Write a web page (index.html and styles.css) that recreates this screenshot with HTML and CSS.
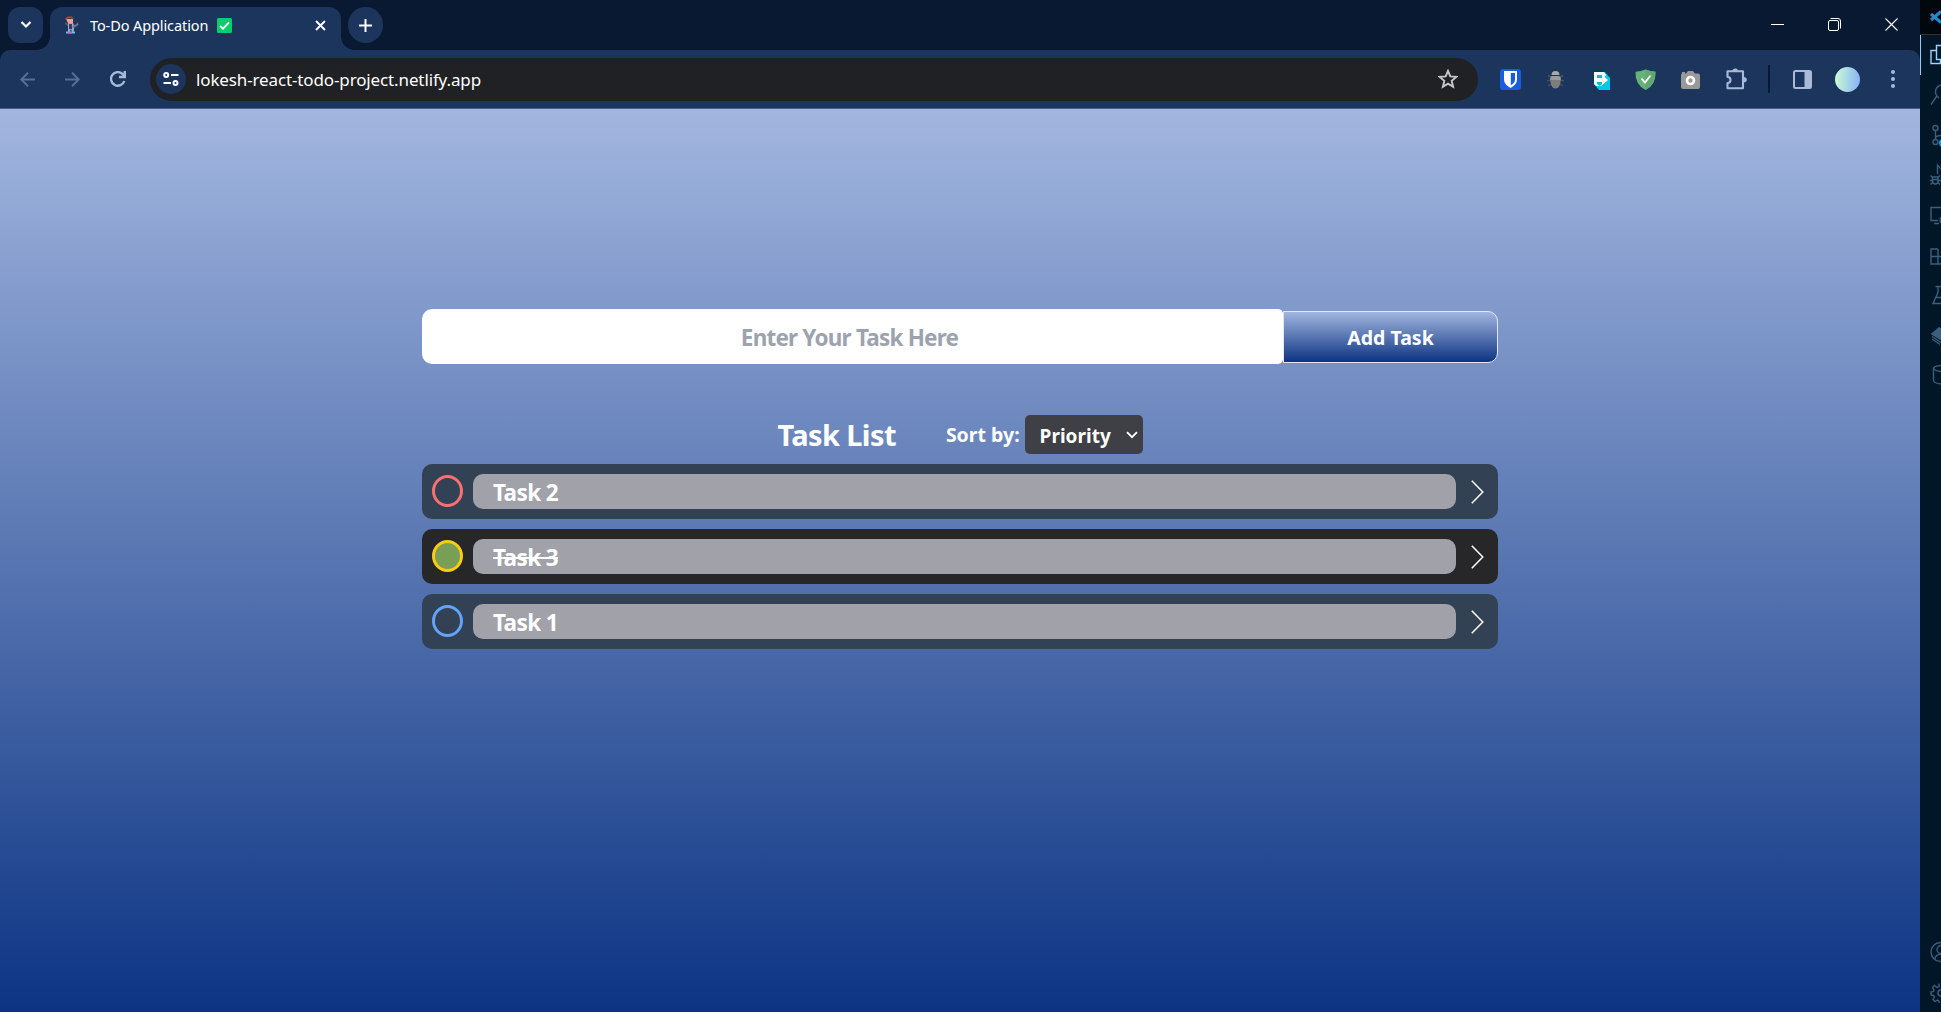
FILE: index.html
```html
<!DOCTYPE html>
<html lang="en">
<head>
<meta charset="utf-8">
<title>To-Do Application</title>
<link rel="stylesheet" href="styles.css">
</head>
<body>
<div class="screen">
  <div class="browser">
    <header class="tabstrip">
      <button class="tab-search" aria-label="Search tabs"><svg width="12" height="8" viewBox="0 0 12 8"><path d="M1.500 1 6 5.500 10.500 1" fill="none" stroke="#fff" stroke-width="2.200"/></svg></button>
      <div class="tab">
        <svg class="favicon" width="16" height="18" viewBox="0 0 16 18"><path d="M2 15.500h9v2H2z" fill="#5dc4e4"/><path d="M4 16h4v1.500H4z" fill="#d65ac6"/><path d="M4 7h5l1.500 3-1 6H8l-1-3-1.500 3H4z" fill="#9baac4"/><path d="M5 8h3v5H5z" fill="#334064"/><path d="M2 3h7v4H4z" fill="#e0a995"/><path d="M1 2.500 4 .5h4l2 2.500-5-1-3 2z" fill="#b8403d"/><path d="m8.500 10 4-2 1.500-2 .5 3-3 2-3 1z" fill="#68758a"/><path d="M1.500 6 4 8v2L1 8z" fill="#5d606c"/></svg>
        <span class="tab-title">To-Do Application</span>
        <svg class="check" width="15" height="15" viewBox="0 0 15 15"><rect width="15" height="15" rx="1.500" fill="#06ce6b"/><path d="m3 7.800 3 2.900 6-6.400" fill="none" stroke="#fff" stroke-width="1.800"/></svg>
        <svg class="tab-close" width="11" height="11" viewBox="0 0 11 11"><path d="m1 1 9 9M10 1 1 10" stroke="#fff" stroke-width="1.900"/></svg>
      </div>
      <button class="new-tab" aria-label="New tab"><svg width="13" height="13" viewBox="0 0 13 13"><path d="M6.500 0v13M0 6.500h13" stroke="#fff" stroke-width="2"/></svg></button>
      <div class="window-controls">
        <svg width="13" height="13" viewBox="0 0 13 13"><path d="M0 6.500h13" stroke="#fff"/></svg>
        <svg width="13" height="13" viewBox="0 0 13 13"><rect x=".5" y="2.500" width="10" height="10" rx="1.500" fill="none" stroke="#fff"/><path d="M2.500.5h7.500q2.500 0 2.500 2.500v7.500" fill="none" stroke="#fff"/></svg>
        <svg width="13" height="13" viewBox="0 0 13 13"><path d="m.5.5 12 12M12.500.5l-12 12" stroke="#fff" stroke-width="1.100"/></svg>
      </div>
    </header>

    <nav class="toolbar">
      <svg class="nav-icon dim" width="15" height="15" viewBox="0 0 15 15"><path d="M15 7.500H1.500M8 .7 1.300 7.500 8 14.300"/></svg>
      <svg class="nav-icon dim" width="15" height="15" viewBox="0 0 15 15"><path d="M0 7.500h13.500M7 .7l6.700 6.800L7 14.300"/></svg>
      <svg class="nav-icon reload" width="16" height="16" viewBox="0 0 16 16"><path d="M14.300 10A6.800 6.800 0 1 1 12.700 3.200L14.500 5.200M14.800 0v6H9"/></svg>
      <div class="omnibox">
        <span class="site-info"><svg width="16" height="14" viewBox="0 0 16 14" fill="none" stroke="#fff" stroke-width="2"><circle cx="3.200" cy="3" r="2"/><path d="M8 3h7.500M.5 11H8"/><circle cx="12.500" cy="11" r="2"/></svg></span>
        <span class="url">lokesh-react-todo-project.netlify.app</span>
        <svg class="star" width="20" height="20" viewBox="0 0 20 20"><path d="m10 1.800 2.300 5.600 6 .5-4.600 3.900 1.400 5.900L10 14.600l-5.100 3.100 1.400-5.900-4.600-3.900 6-.5z" fill="none" stroke="#c7c7c8" stroke-width="1.900"/></svg>
      </div>
      <div class="extensions">
        <svg width="26" height="26" viewBox="0 0 26 26"><rect x="3" y="3" width="21" height="21" rx="3" fill="#175ddc"/><path d="M7 5h13v8.500q0 5-6.500 8.500Q7 18.500 7 13.500z" fill="#fff"/><path d="M13.800 7H18v6.500q0 3.500-4.200 5.800z" fill="#175ddc"/></svg>
        <svg width="26" height="26" viewBox="0 0 26 26"><path d="M9 11 6 9.500m3 5H5m4 3.500-3 2M18 11l3-1.500m-3 5h4M18 18l3 2" stroke="#46536a" stroke-width="1.400"/><path d="M9.500 9q0-4 4-4t4 4z" fill="#aaa9a5"/><path d="M8.300 13q0-3 2.500-3h5.400q2.500 0 2.500 3 0 9.500-5.200 9.500T8.300 13z" fill="#7d7d7c"/><path d="M8.300 14v-1q0-3 2.500-3h5.400q2.500 0 2.500 3v1z" fill="#9b9b98"/></svg>
        <svg width="26" height="26" viewBox="0 0 26 26"><path d="M5 3h14v4H7v10H5z" fill="#063d5c"/><path d="M15 6h3l5 6v12H12l-5-6z" fill="#06c8e8"/><path d="M7 6h10l2 3-2 3v5l-3 3H9l-2-2z" fill="#fff"/><path d="M10 9h5v3h-5zm0 7h5v2l-2 2-3-2z" fill="#06b9d8"/><path d="M9 12h6V9l6 5-6 5v-3H9z" fill="#fff"/></svg>
        <svg width="26" height="26" viewBox="0 0 26 26"><path d="M13.500 3.500q4.500 2 10 2.300Q24 19 13.500 24 3 19 3.500 5.800q5.500-.3 10-2.300z" fill="#67b279"/><path d="M13.500 3.500q4.500 2 10 2.300Q24 19 13.500 24z" fill="#5fa870"/><path d="m9.500 12.500 3.500 4 5.500-7" fill="none" stroke="#fff" stroke-width="1.800"/></svg>
        <svg width="26" height="26" viewBox="0 0 26 26"><path d="M5 7.500V6h3v1.500h1L11 5h5l2 2.500h3q2 0 2 2V21q0 2-2 2H6q-2 0-2-2V9.500q0-2 1-2z" fill="#999"/><circle cx="13.500" cy="14.500" r="3.500" fill="none" stroke="#fff" stroke-width="2.600"/></svg>
        <svg width="26" height="26" viewBox="0 0 26 26"><path d="M5.500 5.200H21v17H5.500V17q3 0 3-3t-3-3z" fill="none" stroke="#a8bad8" stroke-width="2.100" stroke-linejoin="round"/><path d="M10.500 5q0-2.600 2.800-2.600T16 5zM21.500 11q3.300 0 3.300 2.700t-3.300 2.700z" fill="#a8bad8"/></svg>
      </div>
      <span class="divider"></span>
      <svg class="side-panel" width="19" height="19" viewBox="0 0 19 19"><rect x="1" y="1" width="17" height="17" rx="1.500" fill="none" stroke="#a8bad8" stroke-width="2"/><path d="M11.500 1H18v17h-6.500z" fill="#a8bad8"/></svg>
      <span class="avatar"></span>
      <svg class="menu" width="4" height="18" viewBox="0 0 4 18" fill="#a8bad8"><circle cx="2" cy="2" r="2"/><circle cx="2" cy="9" r="2"/><circle cx="2" cy="16" r="2"/></svg>
    </nav>

    <main class="page">
      <div class="todo">
        <form class="entry">
          <div class="task-input"><span class="placeholder">Enter Your Task Here</span></div>
          <button class="add" type="button"><span class="add-label">Add Task</span></button>
        </form>
        <div class="list-head">
          <h1 class="heading">Task List</h1>
          <div class="sort"><span class="sort-label">Sort by:</span>
            <div class="select"><span class="select-value">Priority</span><svg width="12" height="8" viewBox="0 0 12 8"><path d="M1 1.200 6 6.200 11 1.200" fill="none" stroke="#fff" stroke-width="1.900"/></svg></div>
          </div>
        </div>
        <ul class="tasks">
          <li class="task high"><span class="ring"></span><span class="bar"><span class="task-name">Task 2</span></span><svg class="chevron" width="13" height="24" viewBox="0 0 13 24"><path d="m.8.8 11 11.200-11 11.200"/></svg></li>
          <li class="task medium done"><span class="ring"></span><span class="bar"><span class="task-name">Task 3</span></span><svg class="chevron" width="13" height="24" viewBox="0 0 13 24"><path d="m.8.8 11 11.200-11 11.200"/></svg></li>
          <li class="task low"><span class="ring"></span><span class="bar"><span class="task-name">Task 1</span></span><svg class="chevron" width="13" height="24" viewBox="0 0 13 24"><path d="m.8.8 11 11.200-11 11.200"/></svg></li>
        </ul>
      </div>
    </main>
  </div>

  <aside class="editor">
    <div class="editor-title"><svg width="11" height="16" viewBox="0 0 11 16"><path d="m1 5 10 8.500M1 11 11 2.500" stroke="#2489ca" stroke-width="3"/></svg></div>
    <div class="activity">
      <div class="act active"><svg width="11" height="24" viewBox="0 0 11 24"><path d="M11 2.500H6.500v14H11M6 7.500H1v13h9.500v-4"/></svg></div>
      <div class="act"><svg width="11" height="24" viewBox="0 0 11 24"><path d="M11 2Q5 4 5.500 10q.5 3 3.500 5M6.500 13.500 1 21.500"/></svg></div>
      <div class="act"><svg width="11" height="24" viewBox="0 0 11 24"><circle cx="5.500" cy="5" r="2.500"/><path d="M5.500 7.500v9M5.500 15.500q0-3 5.500-3"/><circle cx="5.500" cy="19" r="2.500"/><circle cx="13" cy="20" r="4" fill="#219fd5" stroke="none"/></svg></div>
      <div class="act"><svg width="11" height="24" viewBox="0 0 11 24"><path d="M7.500 11V2l3.500 4M2.500 14h5.500v4q0 3-2.700 3T2.500 18zM.5 12.500l2 2m-2.500 3h2.500m-2 4 2-2M10 12.500l-2 2m3 3H8m2 4-2-2M2.500 16.500H8"/></svg></div>
      <div class="act"><svg width="11" height="24" viewBox="0 0 11 24"><path d="M11 4.500H1v13h7M4 20.500h5"/><circle cx="14" cy="17" r="4"/></svg></div>
      <div class="act"><svg width="11" height="24" viewBox="0 0 11 24"><path d="M8 6H1v15h10M1 13.500h10M8 6v15"/></svg></div>
      <div class="act"><svg width="11" height="24" viewBox="0 0 11 24"><path d="M5.500 3.500H11M8 3.500v6L3 20.500h8M6 14.500h5"/></svg></div>
      <div class="act"><svg width="11" height="24" viewBox="0 0 11 24"><path d="m2 11 7-6 2 1v10.500zM2 13.500l9 6M2 16l8 5.500"/><path d="m2 11 7-6 2 1v10.500z" fill="#3c5f7c"/></svg></div>
      <div class="act"><svg width="11" height="24" viewBox="0 0 11 24"><path d="M11 2.500Q3.500 3 3.500 5.500v12Q4 20.500 11 21M3.500 5.500Q5 8 11 8.500"/></svg></div>
      <div class="act account"><svg width="11" height="24" viewBox="0 0 11 24"><circle cx="10.500" cy="12" r="9.500"/><circle cx="11" cy="9.500" r="4"/><path d="M5 19q0-4 6-5"/></svg></div>
      <div class="act"><svg width="11" height="24" viewBox="0 0 11 24"><circle cx="11" cy="13" r="3"/><path d="M9 3.500v3L7 7.500 4.500 5.500l-2 2L4 10l-.5 1.500L1 12v3l2.500.5L4.500 17 3 19.500l2 2L7.500 20l1.500 1v2"/></svg></div>
    </div>
  </aside>
</div>
</body>
</html>
```
FILE: styles.css
```css
* { box-sizing: border-box; }
body { margin: 0; overflow: hidden; font-family: "Noto Sans", "Open Sans", sans-serif; color: #fff; }
button { border: 0; padding: 0; font: inherit; color: inherit; }
svg { display: block; flex: none; }
span { white-space: nowrap; }

.screen { display: flex; width: 1941px; height: 1012px; overflow: hidden; }
.browser { width: 1920px; display: flex; flex-direction: column; background: #0a1932; }

/* Tab strip */
.tabstrip { height: 50px; display: flex; padding: 7px 22px 0 8px; }
.tab-search, .new-tab { width: 35px; height: 36px; background: #1b355c; display: grid; place-items: center; }
.tab-search { position: relative; z-index: 1; border-radius: 12px; }
.new-tab { border-radius: 18px; margin-left: 7px; z-index: 1; }
.tab { position: relative; width: 291px; height: 43px; margin-left: 7px; padding: 0 15px 7px 14px; display: flex; align-items: center; background: #1b355c; border-radius: 12px 12px 0 0; }
.tab::before, .tab::after { content: ""; position: absolute; bottom: 0; width: 13px; height: 13px; }
.tab::before { left: -13px; background: radial-gradient(circle at 0 0, #0a1932 12.5px, #1b355c 13px); }
.tab::after { right: -13px; background: radial-gradient(circle at 100% 0, #0a1932 12.5px, #1b355c 13px); }
.tab-title { margin-left: 10px; width: 119px; font-size: 14.5px; letter-spacing: -.1px; }
.check { margin-left: 8px; }
.tab-close { margin-left: auto; }
.window-controls { margin-left: auto; display: flex; gap: 44px; padding-top: 11px; }

/* Toolbar */
.toolbar { height: 59px; display: flex; align-items: center; padding: 0 25px 0 20px; background: #1b355c; border-bottom: 1px solid #46608d; border-radius: 10px 10px 0 0; }
.nav-icon { fill: none; stroke: #a8bad8; stroke-width: 2; margin-right: 30px; }
.nav-icon.dim { stroke: #586f94; }
.nav-icon.reload { stroke-width: 2.4; }
.omnibox { width: 1328px; height: 43px; margin-left: -6px; padding: 0 20px 0 6px; display: flex; align-items: center; background: #202124; border-radius: 22px; }
.site-info { width: 30px; height: 30px; border-radius: 50%; background: #1b355c; display: grid; place-items: center; }
.url { margin-left: 10px; font-size: 17px; letter-spacing: -.13px; }
.star { margin-left: auto; }
.extensions { display: flex; gap: 19px; margin-left: 19px; }
.divider { width: 2px; height: 28px; margin-left: 20px; background: #0a1932; }
.side-panel { margin-left: 23px; }
.avatar { width: 25px; height: 25px; margin-left: 23px; border-radius: 50%; background: linear-gradient(95deg, #c9fbd3 5%, #86aefa); }
.menu { margin-left: auto; }

/* To-do page */
.page { flex: 1; display: flex; justify-content: center; background: linear-gradient(to top, #0c3483, #a2b6df); font-weight: 700; }
.todo { width: 1076px; padding-top: 200px; }
.entry { display: flex; align-items: center; height: 55px; }
.task-input { width: 861px; height: 55px; padding: 1px 6px 0 0; display: flex; align-items: center; justify-content: center; background: #fff; border-radius: 10px 5px 5px 10px; }
.placeholder { color: #9ca3af; font-size: 22.5px; letter-spacing: -.8px; }
.add { flex: 1; height: 52px; padding-top: 1px; border: 1px solid #e5e7eb; border-radius: 0 10px 10px 0; background: linear-gradient(to top, #0c3483, #a2b6df); }
.add-label { font-size: 19.5px; }
.list-head { height: 39px; margin-top: 51px; display: flex; justify-content: center; align-items: center; gap: 50px; }
.heading { margin: 0; font-size: 29px; line-height: 39px; letter-spacing: -.6px; white-space: nowrap; }
.sort { display: flex; align-items: center; gap: 5px; }
.sort-label { font-size: 19.5px; }
.select { width: 118px; height: 39px; padding: 0 5px 0 15px; display: flex; align-items: center; justify-content: space-between; background: #3f3f46; border-radius: 5px; }
.select-value { padding-top: 2px; font-size: 19px; }
.tasks { list-style: none; margin: 10px 0 0; padding: 0; display: grid; gap: 10px; }
.task { height: 55px; padding: 10px 14px 10px 10px; display: flex; align-items: center; border-radius: 10px; background: #334155; }
.task.done { background: #27272a; }
.ring { width: 31px; height: 32px; margin-top: -1px; border: 3px solid #60a5fa; border-radius: 50%; }
.high .ring { border-color: #f87171; }
.medium .ring { border-color: #facc15; }
.done .ring { background: #789f55; }
.bar { width: 983px; height: 35px; margin-left: 10px; padding: 1px 0 0 20px; display: flex; align-items: center; border-radius: 10px; background: #a1a1aa; font-size: 22.5px; letter-spacing: -.6px; }
.done .task-name { text-decoration: line-through; }
.chevron { margin-left: auto; fill: none; stroke: #fff; stroke-width: 1.5; }

/* Editor window edge */
.editor { width: 21px; background: #011627; overflow: hidden; display: flex; flex-direction: column; }
.editor-title { height: 35px; padding: 9px 0 0 10px; background: #00080e; border-bottom: 1px solid #333; }
.activity { flex: 1; display: flex; flex-direction: column; }
.act { height: 40px; padding-left: 10px; display: flex; align-items: center; }
.act svg { fill: none; stroke: #3c5f7c; stroke-width: 1.4; }
.active { padding-left: 9px; border-left: 1px solid #97cdf5; }
.active svg { stroke: #9bd2ff; }
.account { margin-top: auto; }
```
